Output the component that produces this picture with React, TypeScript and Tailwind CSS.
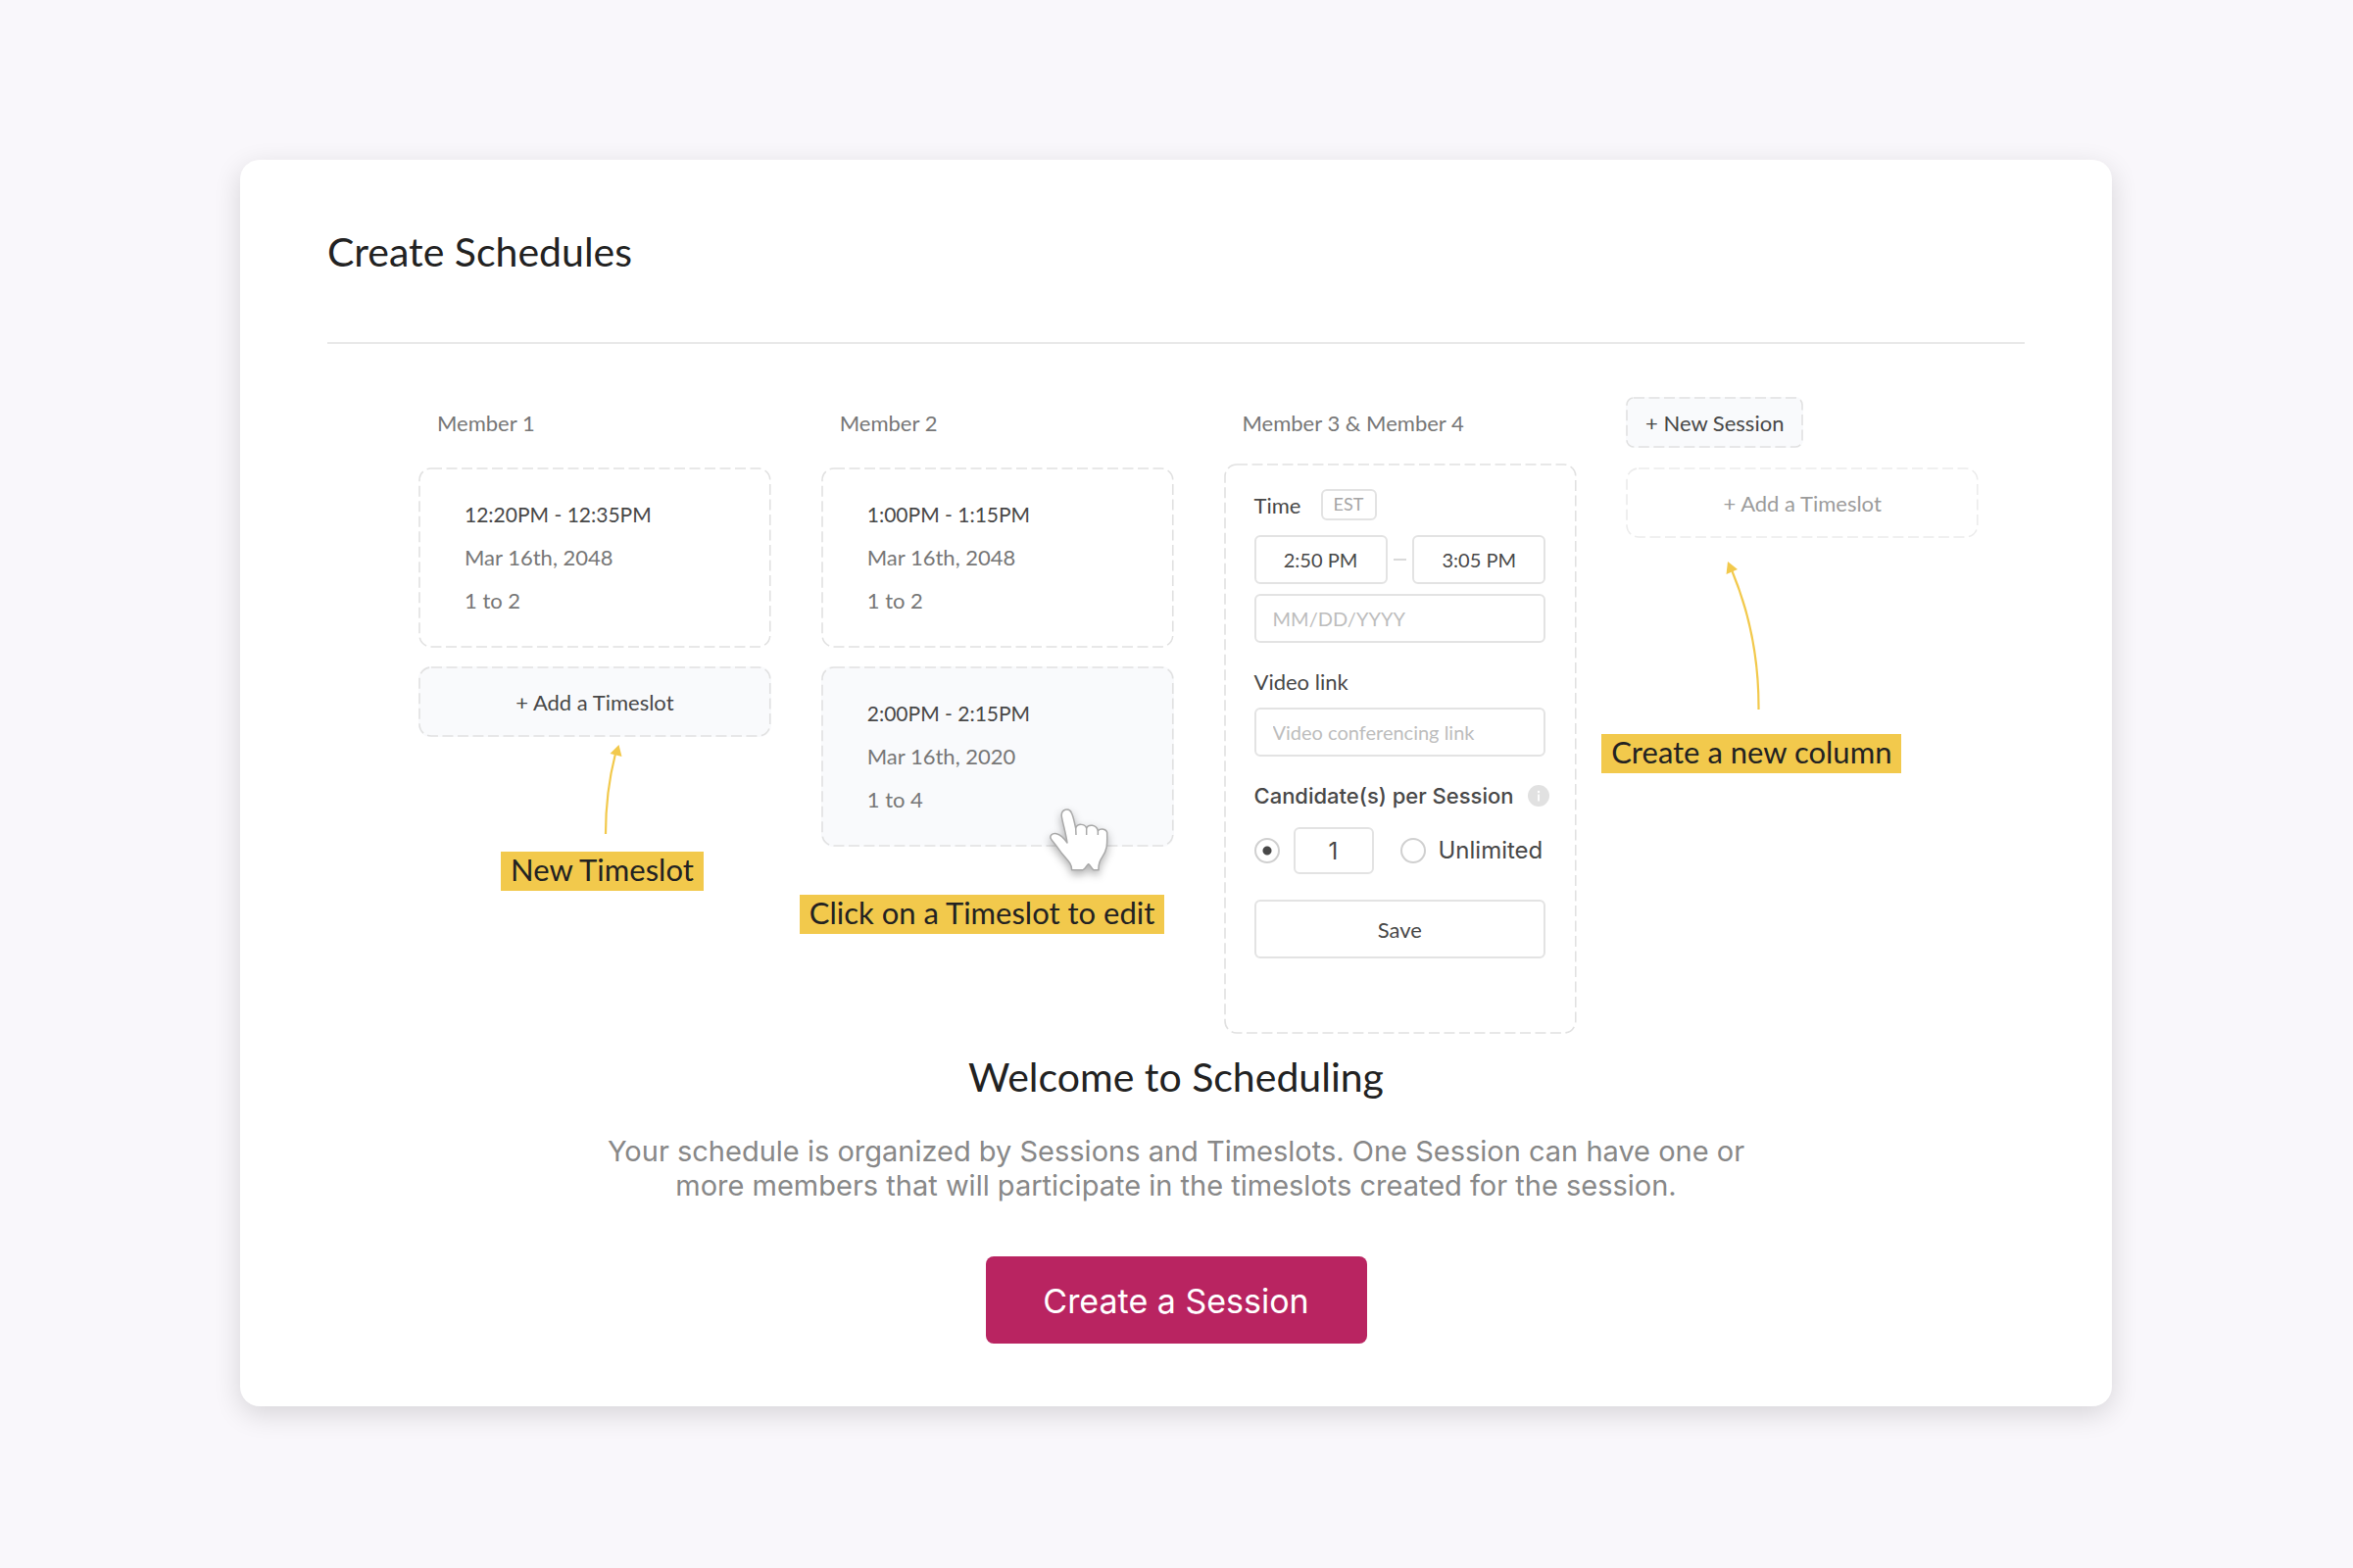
import type { ReactNode } from "react";

const INTER = "font-['Inter','Liberation_Sans',sans-serif]";
const LATO = "font-['Lato','Open_Sans',sans-serif]";

function DashedBox({
  children,
  className = "",
  stroke = "#e1e1e1",
  radius = 12,
}: {
  children?: ReactNode;
  className?: string;
  stroke?: string;
  radius?: number;
}) {
  return (
    <div className={`relative p-[2px] ${className}`}>
      <svg
        aria-hidden="true"
        className="pointer-events-none absolute inset-px h-[calc(100%-2px)] w-[calc(100%-2px)] overflow-visible"
      >
        <rect
          width="100%"
          height="100%"
          rx={radius}
          fill="none"
          stroke={stroke}
          strokeWidth="1.6"
          strokeDasharray="11 4.5"
        />
      </svg>
      {children}
    </div>
  );
}

function ColumnTitle({ children }: { children: ReactNode }) {
  return (
    <h2 className="h-[52px] pl-[19px] text-[22px] leading-[54px] text-[#777777]">
      {children}
    </h2>
  );
}

function Slot({
  time,
  date,
  ratio,
  active = false,
  children,
}: {
  time: string;
  date: string;
  ratio: string;
  active?: boolean;
  children?: ReactNode;
}) {
  return (
    <DashedBox className={active ? "rounded-xl bg-[#f9fafc]" : "rounded-xl"}>
      <div className="py-[24px] pl-[45px] text-[22px] leading-[44px] text-[#777777]">
        <p className="text-[21px] text-[#484848]">{time}</p>
        <p>{date}</p>
        <p>{ratio}</p>
      </div>
      {children}
    </DashedBox>
  );
}

function Note({ children, className }: { children: ReactNode; className: string }) {
  return (
    <p
      className={`w-max bg-[#f2c94c] px-[10px] pb-[3px] text-[31px] leading-[37px] text-[#222222] ${className}`}
    >
      {children}
    </p>
  );
}

function HandCursor() {
  return (
    <svg
      aria-hidden="true"
      viewBox="95 70 180 195"
      className="absolute top-[144px] left-[233px] h-[65px] w-[60px] overflow-visible drop-shadow-[0_4px_4px_rgba(0,0,0,0.3)]"
    >
      <path
        d="M163 261 C163 240 150 232 130 207 C118 190 112 182 101 169 C92 158 103 147 116 150 C130 153 140 165 149 178 C146 155 136 120 132 98 C129 74 155 70 162 86 C169 100 171 118 175 133 C181 118 202 119 208 133 C214 120 238 122 243 141 C252 132 270 136 271 147 C271 175 274 198 256 222 C246 236 244 245 245 261 L229 261 C222 256 220 246 214 243 C208 246 206 257 197 261 Z"
        fill="#fff"
        stroke="#a9a9a9"
        strokeWidth="4.5"
        strokeLinejoin="round"
      />
      <path
        d="M175 132 L176 154 M208 132 V154 M243 140 V154"
        fill="none"
        stroke="#a9a9a9"
        strokeWidth="4.5"
      />
    </svg>
  );
}

const FIELD =
  "block rounded-[6px] border-2 border-[#e3e3e3] bg-white text-[20px] text-[#484848] placeholder:text-[#bdbdbd]";
const RADIO =
  "size-[26px] shrink-0 appearance-none rounded-full border-2 border-[#d0d0d0] bg-white checked:bg-[radial-gradient(circle,#484848_4px,#ffffff_5px)]";

function SlotForm() {
  return (
    <DashedBox className="-mt-1 h-[582px] rounded-xl">
      <form className="px-[29px] pt-[24px] text-[#484848]" onSubmit={(e) => e.preventDefault()}>
        <div className="flex h-[32px] items-center">
          <label htmlFor="start" className="w-[68px] text-[22px]">
            Time
          </label>
          <span className="h-[32px] w-[57px] rounded-[6px] border-2 border-[#e3e3e3] text-center text-[18px] leading-[27px] text-[#a5a5a5]">
            EST
          </span>
        </div>
        <div className="mt-[15px] flex items-center justify-between">
          <input
            id="start"
            className={`${FIELD} h-[50px] w-[136px] text-center`}
            defaultValue="2:50 PM"
          />
          <span className="h-[2px] w-[13px] bg-[#dadada]" />
          <input
            aria-label="End time"
            className={`${FIELD} h-[50px] w-[136px] text-center`}
            defaultValue="3:05 PM"
          />
        </div>
        <input
          aria-label="Date"
          className={`${FIELD} mt-[10px] h-[50px] w-full pl-[17px]`}
          placeholder="MM/DD/YYYY"
        />
        <label htmlFor="video" className="mt-[24px] block text-[22px] leading-[32px]">
          Video link
        </label>
        <input
          id="video"
          className={`${FIELD} mt-[10px] h-[50px] w-full pl-[17px]`}
          placeholder="Video conferencing link"
        />
        <fieldset className={INTER}>
          <legend className="flex items-center pt-[24px] text-[22px] leading-[32px] font-medium whitespace-nowrap">
            Candidate(s) per Session
            <svg aria-hidden="true" viewBox="0 0 22 22" className="ml-[14px] size-[22px] shrink-0">
              <circle cx="11" cy="11" r="11" fill="#e1e1e1" />
              <circle cx="11" cy="7" r="1.2" fill="#fff" />
              <path d="M11 9.5 V16.5" stroke="#fff" strokeWidth="1.8" />
            </svg>
          </legend>
          <div className="mt-[16px] flex items-center text-[24px]">
            <input
              type="radio"
              name="limit"
              aria-label="Limited number"
              defaultChecked
              className={RADIO}
            />
            <input
              aria-label="Candidates"
              defaultValue="1"
              className="ml-[14px] h-[48px] w-[82px] rounded-[6px] border-2 border-[#e3e3e3] text-center"
            />
            <input type="radio" name="limit" id="unlimited" className={`${RADIO} ml-[27px]`} />
            <label htmlFor="unlimited" className="ml-[13px]">
              Unlimited
            </label>
          </div>
        </fieldset>
        <button
          type="submit"
          className="mt-[26px] h-[60px] w-full rounded-[6px] border-2 border-[#e3e3e3] text-[22px]"
        >
          Save
        </button>
      </form>
    </DashedBox>
  );
}

export default function App() {
  return (
    <main className={`min-h-screen bg-[#f9f7fb] py-[163px] pr-[246px] pl-[245px] ${LATO}`}>
      <section className="rounded-[20px] bg-white px-[89px] pt-[70px] pb-[64px] shadow-[0_8px_28px_rgba(0,0,0,0.14)]">
        <h1 className="text-[41px] leading-[48px] text-[#222222]">Create Schedules</h1>
        <hr className="mt-[68px] border-t-2 border-[#e9e9e9]" />

        <div className="mt-[54px] grid grid-cols-4 gap-[51px] pr-[47px] pl-[93px]">
          <div>
            <ColumnTitle>Member 1</ColumnTitle>
            <div className="mt-[20px] flex flex-col gap-[19px]">
              <Slot time="12:20PM - 12:35PM" date="Mar 16th, 2048" ratio="1 to 2" />
              <DashedBox className="rounded-xl bg-[#f9fafc]">
                <button className="block h-[68px] w-full text-[22px] text-[#484848]">
                  + Add a Timeslot
                </button>
              </DashedBox>
            </div>
            <svg
              aria-hidden="true"
              viewBox="0 0 20 92"
              className="mt-[8px] ml-[189px] h-[92px] w-[20px] overflow-visible"
            >
              <path d="M2 91 Q2 48 12 9" fill="none" stroke="#f2c94c" strokeWidth="2.2" />
              <path d="M15.5 0 L6.5 9 L18.5 12 Z" fill="#f2c94c" />
            </svg>
            <Note className="mt-[17px] ml-[84px]">New Timeslot</Note>
          </div>

          <div>
            <ColumnTitle>Member 2</ColumnTitle>
            <div className="mt-[20px] flex flex-col gap-[19px]">
              <Slot time="1:00PM - 1:15PM" date="Mar 16th, 2048" ratio="1 to 2" />
              <Slot time="2:00PM - 2:15PM" date="Mar 16th, 2020" ratio="1 to 4" active>
                <HandCursor />
              </Slot>
            </div>
            <Note className="mt-[49px] -ml-[22px]">Click on a Timeslot to edit</Note>
          </div>

          <div>
            <ColumnTitle>Member 3 &amp; Member 4</ColumnTitle>
            <div className="mt-[20px]">
              <SlotForm />
            </div>
          </div>

          <div>
            <DashedBox className="w-[181px] rounded-lg bg-[#f9fafc]" radius={7}>
              <button className="block h-[48px] w-full text-[22px] text-[#484848]">
                + New Session
              </button>
            </DashedBox>
            <DashedBox className="mt-[20px]" stroke="#ececec">
              <button className="block h-[68px] w-full text-[22px] text-[#9c9c9c]">
                + Add a Timeslot
              </button>
            </DashedBox>
            <svg
              aria-hidden="true"
              viewBox="0 0 36 152"
              className="mt-[24px] ml-[102px] h-[152px] w-[36px] overflow-visible"
            >
              <path d="M33.500 151 Q34 76 6.500 10" fill="none" stroke="#f2c94c" strokeWidth="2.2" />
              <path d="M2 0 L12 8 L0.500 13 Z" fill="#f2c94c" />
            </svg>
            <Note className="mt-[24px] -ml-[25px]">Create a new column</Note>
          </div>
        </div>

        <div className="mt-[20px] flex flex-col items-center text-center">
          <h2 className="text-[41px] leading-[48px] text-[#222222]">Welcome to Scheduling</h2>
          <p className={`mt-[34px] max-w-[1190px] text-[29px] leading-[35px] text-[#888888] ${INTER}`}>
            Your schedule is organized by Sessions and Timeslots. One Session can have one or more
            members that will participate in the timeslots created for the session.
          </p>
          <button
            className={`mt-[55px] h-[89px] w-[389px] rounded-[8px] bg-[#b92461] pt-[2px] text-[34px] text-white ${INTER}`}
          >
            Create a Session
          </button>
        </div>
      </section>
    </main>
  );
}
